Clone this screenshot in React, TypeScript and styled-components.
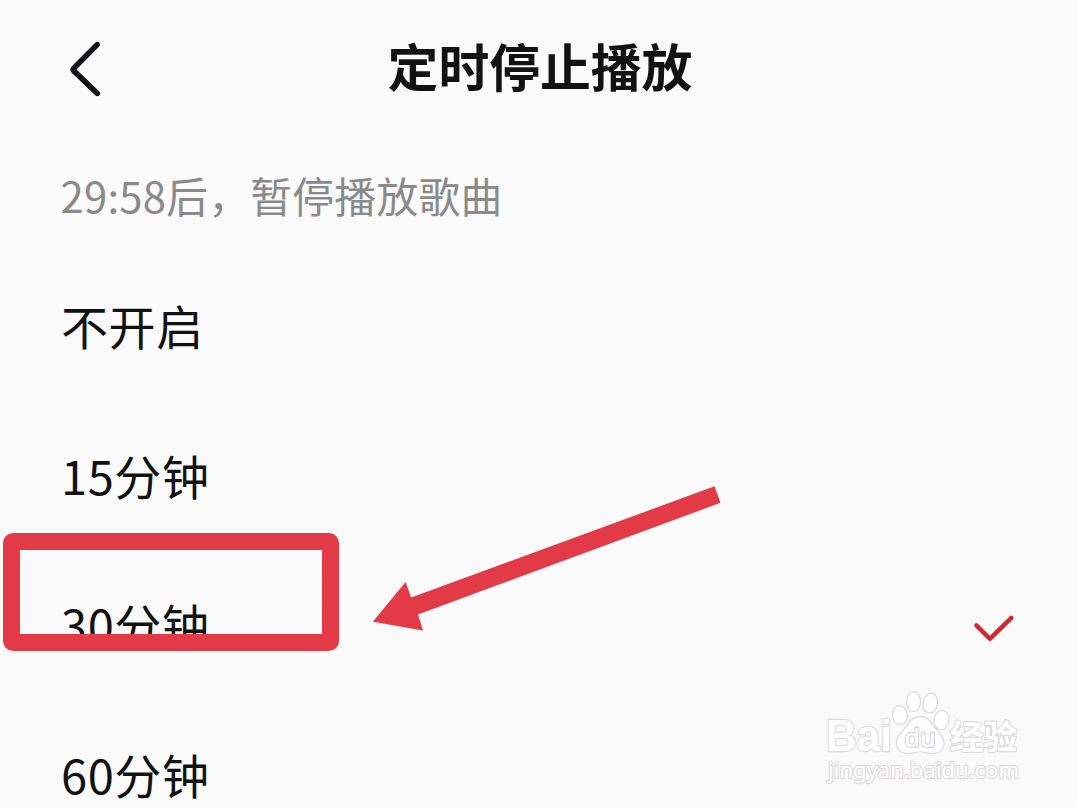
import React from 'react'
import styled, { createGlobalStyle } from 'styled-components'

const options = [
  { label: '不开启', selected: false },
  { label: '15分钟', selected: false },
  { label: '30分钟', selected: true },
  { label: '60分钟', selected: false },
]

export default () => {
  return (
    <>
      <GlobalStyle />
      <Screen>
        <Header>
          <BackButton aria-label='返回'>
            <svg width='36' height='60' viewBox='0 0 36 60' fill='none'>
              <path
                d='M31.2 5.6 L7.8 29.3 Q6.6 30.6 7.8 31.9 L31.2 54.2'
                stroke='#121214'
                strokeWidth='5.6'
                strokeLinecap='round'
                strokeLinejoin='round'
              />
            </svg>
          </BackButton>
          <Title>定时停止播放</Title>
        </Header>
        <Countdown>29:58后，暂停播放歌曲</Countdown>
        <List>
          {options.map(({ label, selected }) => (
            <Option key={label}>
              <Label>{label}</Label>
              {selected && <Check />}
            </Option>
          ))}
        </List>
        <Highlight />
        <Arrow />
        <Watermark />
      </Screen>
    </>
  )
}

const Check = () => (
  <CheckSvg width='42' height='30' viewBox='0 0 42 30' fill='none'>
    <path
      d='M3.4 11.4 L16.8 24.8 L38.4 3.8'
      stroke='#d02a30'
      strokeWidth='4.4'
      strokeLinecap='round'
      strokeLinejoin='round'
    />
  </CheckSvg>
)

const Arrow = () => (
  <ArrowSvg width='350' height='150' viewBox='370 484 350 150'>
    <path
      d='M714.5 486.3 L720.5 502.8 L418 614.6 L423 630.5 L372.8 621.8 L405.6 582 L411.2 597.6 Z'
      fill='#e23a46'
    />
  </ArrowSvg>
)

const Watermark = () => (
  <WatermarkSvg width='210' height='100' viewBox='820 686 210 100'>
    <g fill='#fff' stroke='#dcdcdc' strokeWidth='1.3'>
      <ellipse cx='900' cy='715.2' rx='7.4' ry='9.6' transform='rotate(-8 900 715)' />
      <ellipse cx='913.5' cy='701.6' rx='7' ry='10' />
      <ellipse cx='930.4' cy='703' rx='7.2' ry='10' transform='rotate(8 930 703)' />
      <ellipse cx='941.4' cy='720' rx='7.4' ry='9.8' transform='rotate(8 941 720)' />
      <path d='M920 716.5 C926 716.5 930 720 933 725 C937 731 944 735 944 743 C944 750 939 753.5 932 753.5 C927 753.5 924 751.8 920 751.8 C916 751.8 913 753.5 908 753.5 C900 753.5 896.5 749 896.5 742 C896.5 735 903 732 907 725.5 C910 720 914 716.5 920 716.5 Z' />
      <Brand x='826' y='751' textLength='66' lengthAdjust='spacingAndGlyphs'>
        Bai
      </Brand>
      <Du x='904.5' y='747' textLength='31' lengthAdjust='spacingAndGlyphs'>
        du
      </Du>
      <Jingyan x='950' y='749' textLength='67'>
        经验
      </Jingyan>
      <Site x='828' y='777.5' textLength='191' lengthAdjust='spacingAndGlyphs'>
        jingyan.baidu.com
      </Site>
    </g>
  </WatermarkSvg>
)

const GlobalStyle = createGlobalStyle`
  body {
    margin: 0;
    background: #fafafa;
    font-family: 'Noto Sans CJK SC', sans-serif;
    color: #121212;
  }
`

const Screen = styled.div`
  position: relative;
  height: 807px;
  overflow: hidden;
  background: #fafafa;
`

const Header = styled.header`
  display: grid;
  grid-template-columns: 160px 1fr 160px;
  align-items: center;
  height: 138px;
`

const BackButton = styled.button`
  display: flex;
  padding: 0 0 0 66px;
  border: 0;
  background: none;
`

const Title = styled.h1`
  margin: 0;
  padding: 0 0 9px 3px;
  font-size: 50.8px;
  line-height: 74px;
  font-weight: 700;
  text-align: center;
`

const Countdown = styled.p`
  display: flex;
  align-items: center;
  box-sizing: border-box;
  height: 114px;
  margin: 0;
  padding: 0 60.5px 1px;
  font-size: 41.8px;
  letter-spacing: 0.25px;
  color: #8a8a8a;
`

const List = styled.ul`
  margin: 0;
  padding: 0;
  list-style: none;
`

const Option = styled.li`
  display: flex;
  align-items: center;
  justify-content: space-between;
  height: 149.8px;
  padding: 0 62px 0 61px;
`

const Label = styled.span`
  padding-bottom: 4px;
  font-size: 47px;
  line-height: 68px;
  letter-spacing: 0.6px;
`

const CheckSvg = styled.svg`
  margin-top: 6px;
`

const Highlight = styled.div`
  position: absolute;
  left: 2.5px;
  top: 533px;
  box-sizing: border-box;
  width: 336px;
  height: 118px;
  border: 17.5px solid #e23a46;
  border-radius: 10px;
`

const ArrowSvg = styled.svg`
  position: absolute;
  left: 370px;
  top: 484px;
  overflow: visible;
`

const WatermarkSvg = styled.svg`
  position: absolute;
  left: 820px;
  top: 686px;
`

const Mark = styled.text`
  paint-order: stroke;
  stroke-width: 2.4px;
  stroke-linejoin: round;
`

const Brand = styled(Mark)`
  font: 700 44px 'Liberation Sans', sans-serif;
`

const Du = styled(Mark)`
  font: 500 26px 'Noto Sans', sans-serif;
  stroke: #d4d4d4;
`

const Jingyan = styled(Mark)`
  font: 700 33.5px 'Noto Sans CJK SC', sans-serif;
`

const Site = styled(Mark)`
  font: 400 22px 'Noto Sans', sans-serif;
`
